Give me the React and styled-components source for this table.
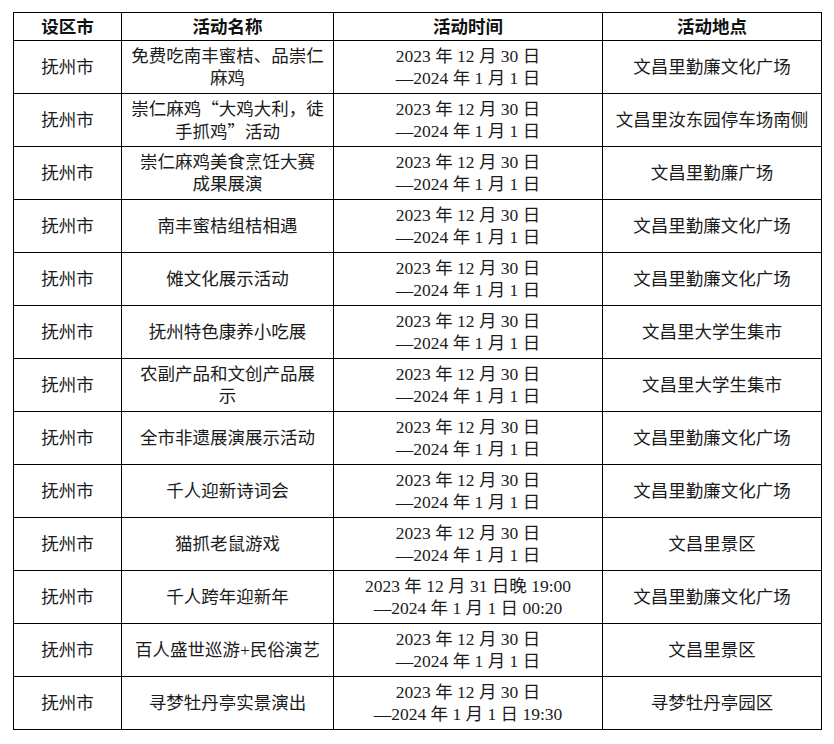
import React from "react";
import styled, { createGlobalStyle } from "styled-components";

const GlobalStyle = createGlobalStyle`
  html, body {
    margin: 0;
    padding: 0;
    background: #ffffff;
  }
`;

const Page = styled.div`
  padding: 12px 0 0 13px;
  font-family: "Liberation Serif", "Noto Sans CJK SC", serif;
  color: #1b1b1b;
`;

const Table = styled.table`
  border-collapse: collapse;
  table-layout: fixed;
  width: 808px;
  font-size: 17.5px;
`;

const HeadCell = styled.th`
  border: 1px solid #000;
  height: 27px;
  padding: 0;
  font-weight: 700;
  text-align: center;
  vertical-align: middle;
  line-height: 20px;
  color: #111;
`;

const Cell = styled.td`
  border: 1px solid #000;
  height: 52px;
  padding: 0 4px;
  text-align: center;
  vertical-align: middle;
  line-height: 22px;
  white-space: nowrap;
`;

const Line = styled.div`
  display: block;
`;

const Quote = styled.span`
  font-family: "Noto Sans CJK SC", sans-serif;
  display: inline-block;
  width: 1em;
  text-align: ${(p) => (p.$open ? "right" : "left")};
`;

const COLS = [108, 212, 269, 219];

const HEAD = ["设区市", "活动名称", "活动时间", "活动地点"];

const STD_TIME = ["2023 年 12 月 30 日", "—2024 年 1 月 1 日"];

const ROWS = [
  { name: ["免费吃南丰蜜桔、品崇仁", "麻鸡"], place: "文昌里勤廉文化广场" },
  { name: ["崇仁麻鸡“大鸡大利，徒", "手抓鸡”活动"], place: "文昌里汝东园停车场南侧" },
  { name: ["崇仁麻鸡美食烹饪大赛", "成果展演"], place: "文昌里勤廉广场" },
  { name: ["南丰蜜桔组桔相遇"], place: "文昌里勤廉文化广场" },
  { name: ["傩文化展示活动"], place: "文昌里勤廉文化广场" },
  { name: ["抚州特色康养小吃展"], place: "文昌里大学生集市" },
  { name: ["农副产品和文创产品展", "示"], place: "文昌里大学生集市" },
  { name: ["全市非遗展演展示活动"], place: "文昌里勤廉文化广场" },
  { name: ["千人迎新诗词会"], place: "文昌里勤廉文化广场" },
  { name: ["猫抓老鼠游戏"], place: "文昌里景区" },
  {
    name: ["千人跨年迎新年"],
    time: ["2023 年 12 月 31 日晚 19:00", "—2024 年 1 月 1 日 00:20"],
    place: "文昌里勤廉文化广场",
  },
  { name: ["百人盛世巡游+民俗演艺"], place: "文昌里景区" },
  {
    name: ["寻梦牡丹亭实景演出"],
    time: ["2023 年 12 月 30 日", "—2024 年 1 月 1 日 19:30"],
    place: "寻梦牡丹亭园区",
  },
];

// curly quotes get a full-width CJK box, as in the printed table
const renderText = (text) =>
  text.split(/([“”])/).map((part, i) =>
    part === "“" || part === "”" ? (
      <Quote key={i} $open={part === "“"}>
        {part}
      </Quote>
    ) : (
      part
    )
  );

const Lines = ({ items }) =>
  items.map((text, i) => <Line key={i}>{renderText(text)}</Line>);

export default function App() {
  return (
    <Page>
      <GlobalStyle />
      <Table>
        <colgroup>
          {COLS.map((w, i) => (
            <col key={i} style={{ width: w }} />
          ))}
        </colgroup>
        <thead>
          <tr>
            {HEAD.map((h) => (
              <HeadCell key={h}>{h}</HeadCell>
            ))}
          </tr>
        </thead>
        <tbody>
          {ROWS.map((row, i) => (
            <tr key={i}>
              <Cell>抚州市</Cell>
              <Cell>
                <Lines items={row.name} />
              </Cell>
              <Cell>
                <Lines items={row.time || STD_TIME} />
              </Cell>
              <Cell>{row.place}</Cell>
            </tr>
          ))}
        </tbody>
      </Table>
    </Page>
  );
}
